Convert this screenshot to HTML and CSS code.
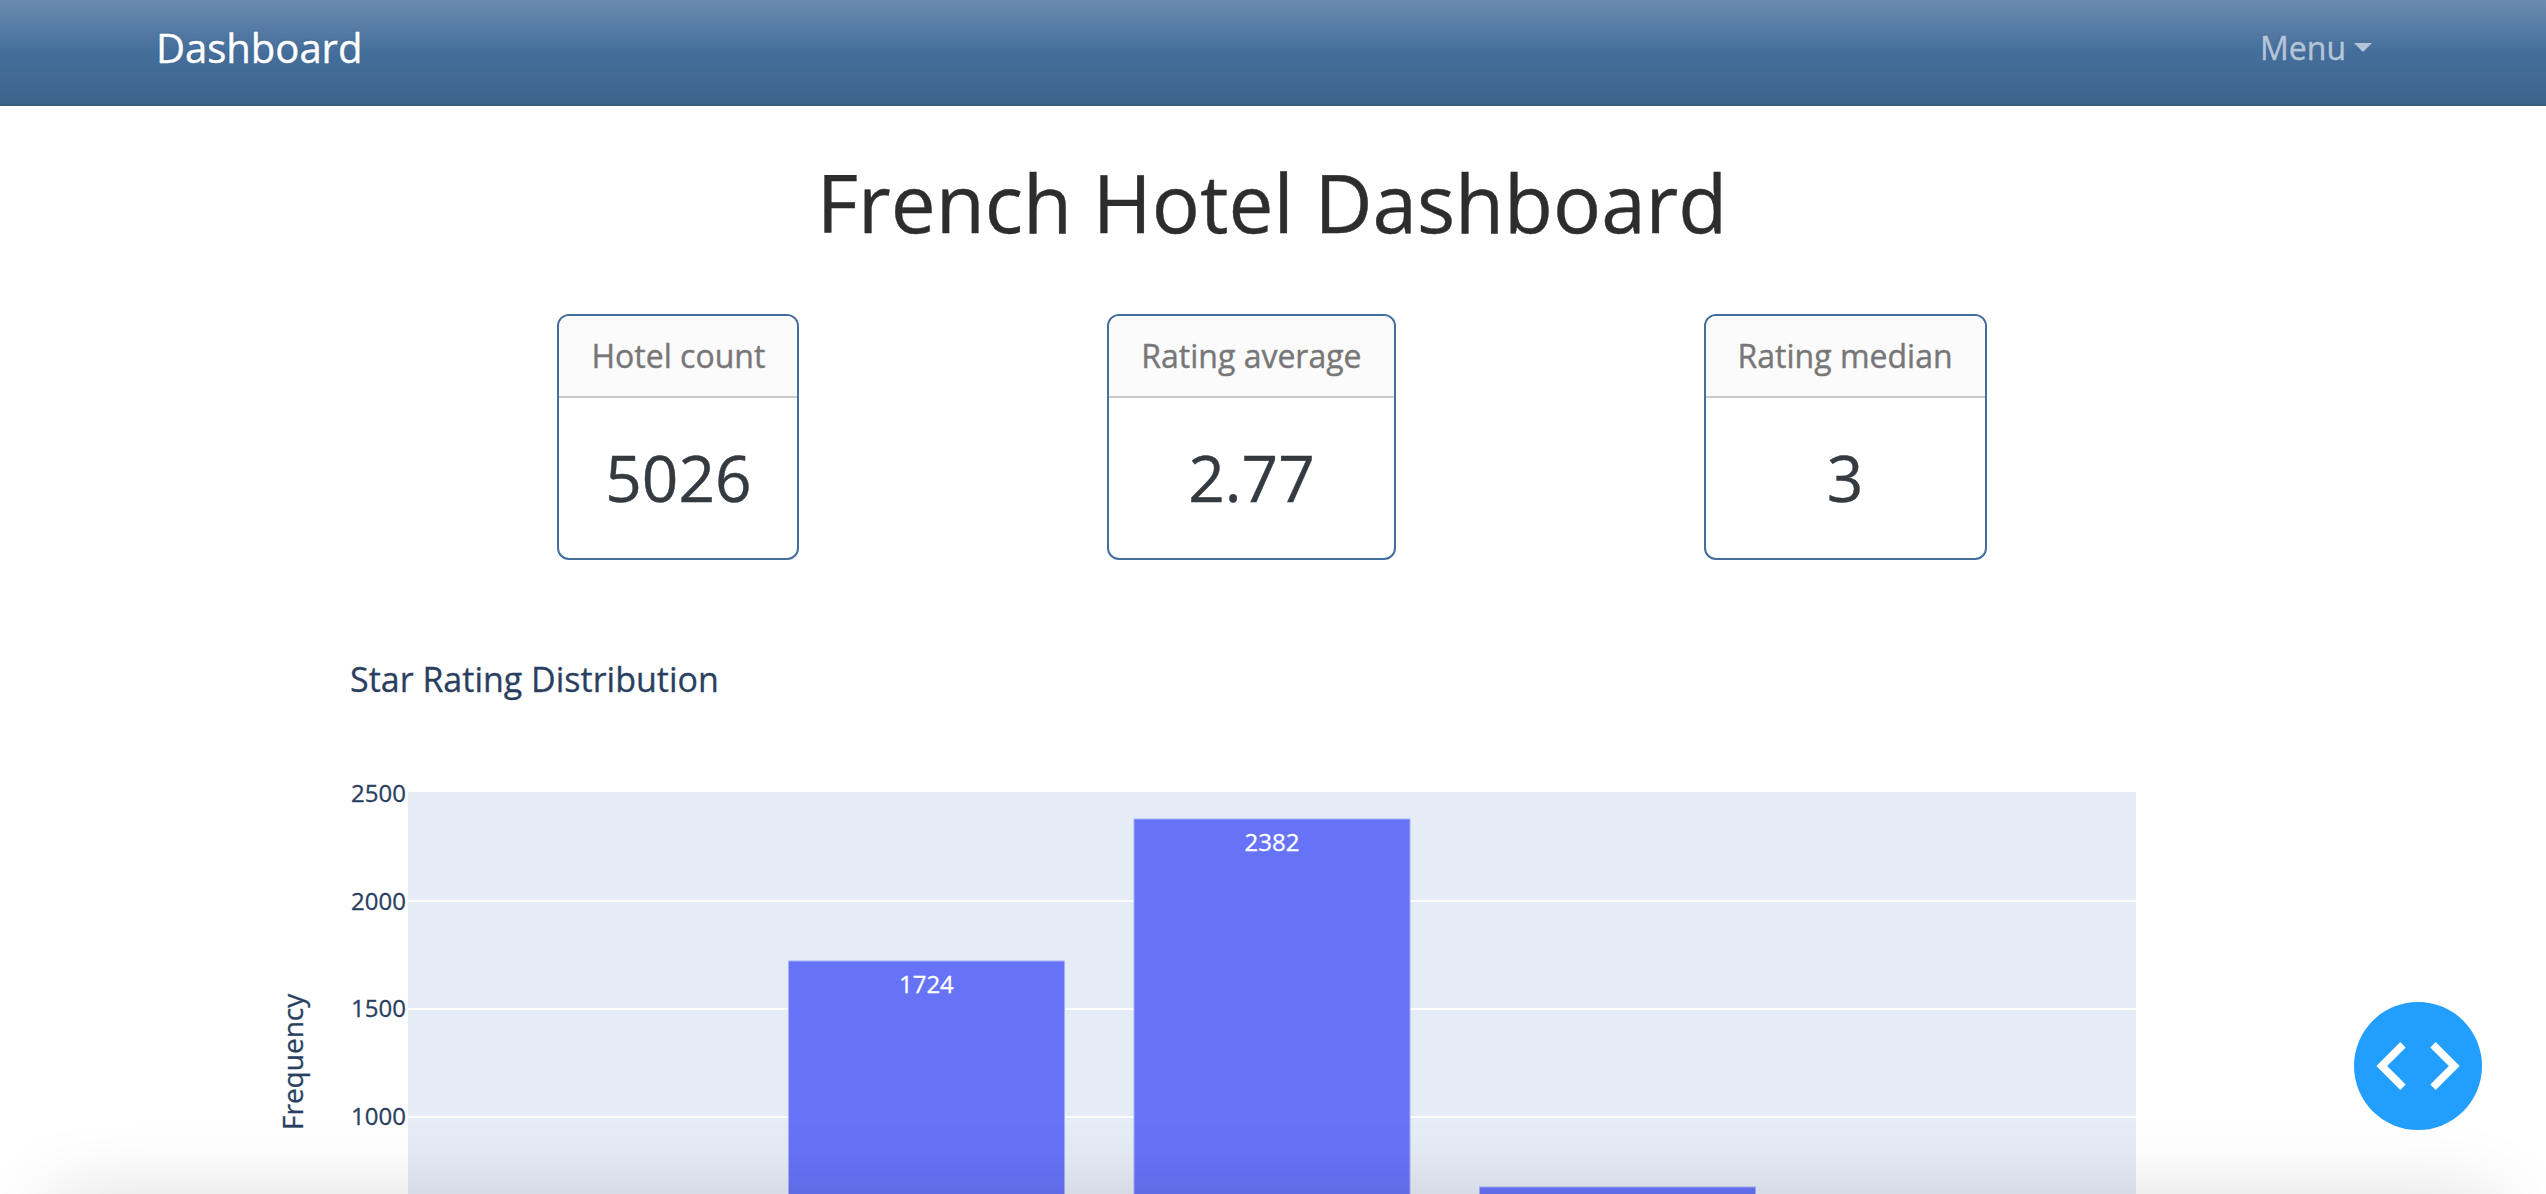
FILE: index.html
```html
<!DOCTYPE html>
<html lang="en">
<head>
<meta charset="utf-8">
<title>Dashboard</title>
<link rel="stylesheet" href="styles.css">
</head>
<body>
<nav class="navbar">
  <a class="brand">Dashboard</a>
  <a class="menu">Menu<span class="caret"></span></a>
</nav>
<main class="content">
  <h1 class="title">French Hotel Dashboard</h1>
  <section class="cards">
    <article class="card"><div class="card-header">Hotel count</div><div class="card-value">5026</div></article>
    <article class="card"><div class="card-header">Rating average</div><div class="card-value">2.77</div></article>
    <article class="card"><div class="card-header">Rating median</div><div class="card-value">3</div></article>
  </section>
  <svg class="chart" width="2028" height="594" viewBox="0 0 2028 594">
    <text class="chart-title" x="92" y="92">Star Rating Distribution</text>
    <rect class="plot" x="150" y="192" width="1728" height="402"/>
    <path class="grid" d="M150 301H1878M150 409H1878M150 517H1878"/>
    <g class="bars">
      <rect x="530.5" y="361" width="276" height="240"/>
      <rect x="876" y="219" width="276" height="400"/>
      <rect x="1221.5" y="587" width="276" height="40"/>
    </g>
    <g class="ticks">
      <text x="148" y="202">2500</text>
      <text x="148" y="310">2000</text>
      <text x="148" y="417">1500</text>
      <text x="148" y="525">1000</text>
    </g>
    <g class="values">
      <text x="668.4" y="393">1724</text>
      <text x="1014" y="251">2382</text>
    </g>
    <text class="axis-title" transform="translate(45 530) rotate(-90)">Frequency</text>
  </svg>
</main>
<button class="debug" aria-label="Developer tools">
  <svg width="128" height="128" viewBox="0 0 128 128"><path d="M49 42.7L27.7 64L49 85.3M79 42.7L100.3 64L79 85.3"/></svg>
</button>
<div class="shade"></div>
</body>
</html>
```
FILE: styles.css
```css
* { box-sizing: border-box; }
html, body { height: 100%; }
body {
  margin: 0;
  overflow: hidden;
  background: #fff;
  font: 32px/1.5 "Open Sans", sans-serif;
  color: #2d2d2d;
  -webkit-text-stroke: .4px;
}
.navbar {
  height: 106px;
  padding: 0 174px 8px 156px;
  display: flex;
  align-items: center;
  justify-content: space-between;
  background: linear-gradient(#6b8cb0, #446e9b 50%, #3f648b);
  border-bottom: 2px solid #385a7f;
  text-shadow: -2px -2px 0 rgba(0, 0, 0, .05);
}
.brand { font-size: 40px; color: #fff; }
.menu { display: flex; align-items: center; gap: 8px; color: #b4c5d7; }
.caret {
  border: 9px solid transparent;
  border-top-color: #b4c5d7;
  border-bottom: 0;
  margin-top: -2px;
}
.content { display: flex; flex-direction: column; align-items: center; padding-right: 2px; }
.title { margin: 48px 0 0; font-size: 80px; line-height: 96px; font-weight: 400; }
.cards { display: flex; justify-content: center; gap: 308px; margin-top: 64px; }
.card {
  height: 246px;
  border: 2px solid #446e9b;
  border-radius: 12px;
  overflow: hidden;
  text-align: center;
}
.card-header {
  height: 82px;
  padding: 16px 32px;
  background: #fbfbfb;
  border-bottom: 2px solid #cacaca;
  color: #777;
}
.card-value { padding-top: 41px; font-size: 64px; line-height: 77px; color: #343a40; }
.chart { display: block; margin-top: 40px; flex: none; }
.chart text { stroke: none; }
.chart-title { font-size: 34px; fill: #2a3f5f; }
.axis-title { font-size: 28px; fill: #2a3f5f; }
.plot { fill: #e5ecf6; }
.grid { stroke: #fff; stroke-width: 2; }
.bars rect { fill: #6673f6; stroke: #a6b0f6; stroke-width: 1; }
.ticks { font-size: 24px; fill: #2a3f5f; text-anchor: end; }
.values { font-size: 24px; fill: #fff; text-anchor: middle; }
.chart .chart-title, .chart .axis-title, .chart .ticks text { stroke: #2a3f5f; stroke-width: .3px; }
.chart .values text { stroke: #fff; stroke-width: .3px; }
.debug {
  position: fixed;
  right: 64px;
  bottom: 64px;
  width: 128px;
  height: 128px;
  padding: 0;
  border: 0;
  border-radius: 50%;
  background: #229ffe;
}
.debug svg { display: block; }
.debug path { fill: none; stroke: #fff; stroke-width: 7.6; }
.shade {
  position: fixed;
  left: 50px;
  right: 50px;
  top: 1200px;
  height: 200px;
  box-shadow: 0 0 80px rgba(0, 0, 0, .15);
}
```
